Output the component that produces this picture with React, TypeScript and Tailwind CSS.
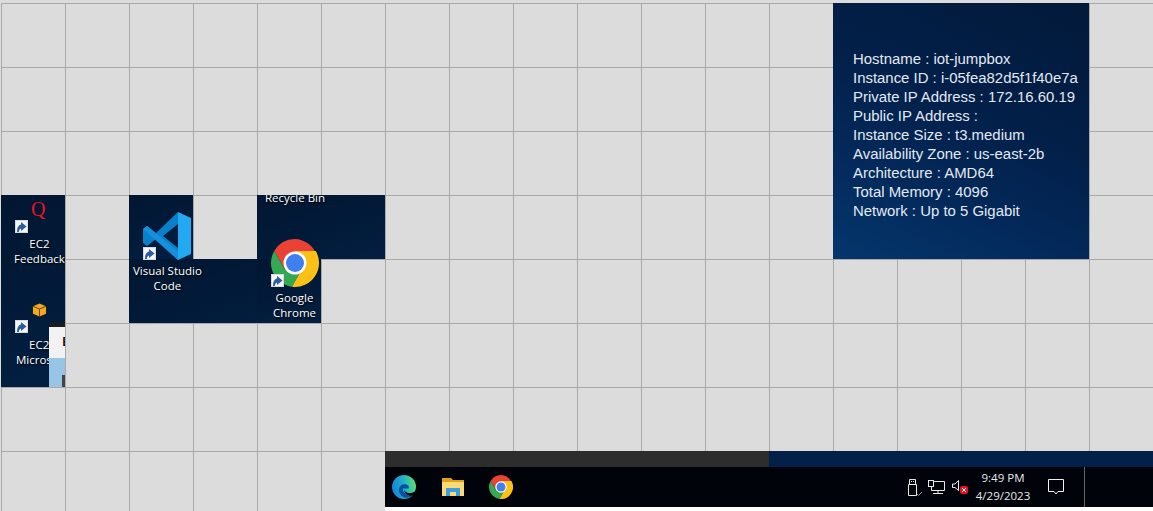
const TILE_BG = 'bg-[linear-gradient(160deg,#011631_0%,#021b3a_60%,#021f42_100%)]';

function Shortcut({ className }: { className: string }) {
  return (
    <svg className={`absolute ${className}`} width="13" height="13" viewBox="0 0 13 13">
      <rect width="13" height="13" fill="#d5dae0" />
      <rect x="1" y="1" width="11" height="11" fill="#f4f6f8" />
      <path d="M2 12C2 7.500 3.500 5 6 4.500V2l5.500 4.500L6 11V8.500C4.800 8.800 4 10 3.800 12z" fill="#2c5c9e" />
    </svg>
  );
}

function ChromeIcon({ size }: { size: number }) {
  return (
    <svg width={size} height={size} viewBox="0 0 48 48">
      <path d="M24 0A24 24 0 0 0 3.200 12L13.600 30 24 14h20.800A24 24 0 0 0 24 0z" fill="#ea4335" />
      <path d="M3.200 12A24 24 0 0 0 21 47.800L31 30H13.600z" fill="#34a853" />
      <path d="M44.800 12H24l7 18-10 17.800A24 24 0 0 0 44.800 12z" fill="#fbc116" />
      <circle cx="24" cy="24" r="11.500" fill="#fff" />
      <circle cx="24" cy="24" r="9" fill="#3f7fee" />
    </svg>
  );
}

function VsCodeIcon() {
  return (
    <svg width="50" height="50" viewBox="0 0 50 50">
      <path d="M36 1 14 22 5 15l-4 3v14l4 3 9-7 22 21z" fill="#0a7fcb" />
      <path d="M36 13 21 25l15 12z" fill="#021c3e" />
      <path d="M1 18l4-3 31 25v9L1 18z" fill="#1590dc" />
      <path d="M36 1 49 7v36l-13 6z" fill="#23a9f2" />
    </svg>
  );
}

function DesktopLabel({ lines, className }: { lines: string[]; className: string }) {
  return (
    <div className={`absolute text-center text-[11.5px] leading-[15px] text-white whitespace-nowrap [text-shadow:1px_1px_2px_#000] ${className}`}>
      {lines.map((line) => (
        <div key={line}>{line}</div>
      ))}
    </div>
  );
}

const INFO = [
  'Hostname : iot-jumpbox',
  'Instance ID : i-05fea82d5f1f40e7a',
  'Private IP Address : 172.16.60.19',
  'Public IP Address :',
  'Instance Size : t3.medium',
  'Availability Zone : us-east-2b',
  'Architecture : AMD64',
  'Total Memory : 4096',
  'Network : Up to 5 Gigabit',
];

export default function App() {
  return (
    <div className="h-[511px] w-[1153px] overflow-hidden bg-[#dcdcdc] font-['Open_Sans','Noto_Sans',sans-serif]">
      <div className="grid grid-cols-[repeat(18,64px)] grid-rows-[repeat(8,64px)] ml-px mt-[3px] w-[1152px] h-[512px] bg-[linear-gradient(to_right,#a9a9a9_1px,transparent_1px),linear-gradient(to_bottom,#a9a9a9_1px,transparent_1px)] bg-[size:64px_64px]">
        {/* feedback / micros column */}
        <div className={`relative col-start-1 row-start-4 row-span-3 overflow-hidden ${TILE_BG}`}>
          <span className="absolute left-[30px] top-[3px] font-['Liberation_Serif',serif] text-[20px] leading-[22px] text-[#ee1320]">Q</span>
          <Shortcut className="left-[14px] top-[25px]" />
          <DesktopLabel lines={['EC2', 'Feedback']} className="left-[13px] top-[41px]" />
          <svg className="absolute left-[31px] top-[107px]" width="15" height="16" viewBox="0 0 16 16">
            <path d="M8 1l7 3v8l-7 3-7-3V4z" fill="#f2a91e" />
            <path d="M1 4l7 3 7-3M8 7v8" stroke="#5a3c08" strokeWidth="1" fill="none" />
          </svg>
          <Shortcut className="left-[14px] top-[125px]" />
          <DesktopLabel lines={['EC2']} className="left-[28px] top-[142px]" />
          <DesktopLabel lines={['Micros']} className="left-[15px] top-[157px]" />
          <div className="absolute left-[48px] top-[128px] h-[64px] w-[16px] bg-[#f2f2f2]">
            <div className="h-[4px] bg-[#1c1c1c]" />
            <div className="h-[31px] pl-[13px] text-[13px] leading-[29px] font-semibold text-black">E</div>
            <div className="h-[29px] bg-[#98c4e6] pl-[13px] pt-[17px]">
              <div className="h-[12px] w-[3px] bg-[#444]" />
            </div>
          </div>
        </div>

        {/* vs code */}
        <div className={`relative col-start-3 row-start-4 ${TILE_BG}`}>
          <div className="absolute left-[13px] top-[16px] z-10">
            <VsCodeIcon />
          </div>
          <Shortcut className="left-[14px] top-[52px] z-10" />
        </div>
        <div className={`relative col-start-3 col-span-3 row-start-5 ${TILE_BG}`}>
          <DesktopLabel lines={['Visual Studio', 'Code']} className="left-[4px] top-[4px]" />
        </div>

        {/* recycle bin + chrome */}
        <div className={`relative col-start-5 col-span-2 row-start-4 overflow-hidden ${TILE_BG}`}>
          <DesktopLabel lines={['Recycle Bin']} className="left-[8px] top-[-5px]" />
        </div>
        <div className={`relative col-start-5 row-start-5 ${TILE_BG}`}>
          <div className="absolute left-[14px] top-[-20px]">
            <ChromeIcon size={48} />
          </div>
          <Shortcut className="left-[14px] top-[15px]" />
          <DesktopLabel lines={['Google', 'Chrome']} className="left-[16px] top-[31px]" />
        </div>

        {/* bginfo panel */}
        <div className="col-start-14 col-span-4 row-start-1 row-span-4 flex items-center bg-[linear-gradient(25deg,#04366c_0%,#03295a_30%,#021f48_60%,#021a3a_100%)] pl-[20px] pt-[7px]">
          <div className="font-['Liberation_Sans',sans-serif] text-[14.93px] leading-[19px] text-[#e2e9f2]">
            {INFO.map((line) => (
              <div key={line}>{line}</div>
            ))}
          </div>
        </div>

        {/* taskbar */}
        <div className="col-start-7 col-span-12 row-start-8 flex flex-col bg-white">
          <div className="flex h-[16px] shrink-0">
            <div className="w-[384px] bg-[#2d2d2d]" />
            <div className="flex-1 bg-[#03204a]" />
          </div>
          <div className="flex h-[40px] items-center bg-[#01030a] text-white">
            <div className="flex w-[144px] items-center gap-[25px] pl-[6px]">
              <svg width="26" height="26" viewBox="0 0 26 26">
                <defs>
                  <linearGradient id="edgeTop" x1="0" y1="0.600" x2="1" y2="0.400">
                    <stop offset="0" stopColor="#1580dc" />
                    <stop offset="0.550" stopColor="#1fb4c8" />
                    <stop offset="1" stopColor="#62dc6a" />
                  </linearGradient>
                </defs>
                <circle cx="13" cy="13" r="12" fill="url(#edgeTop)" />
                <path d="M8 16C8 11 12 9.500 15.500 10.500 18 11.500 18.500 13.500 17.500 14.500H12C11 17.500 14 21 21 20L20 23C14 25.500 8 22 8 16z" fill="#0d4f9c" />
                <path d="M13 15C13 18 17 20 22 18.500 24 18 25 16 25 14V26H17C20 25 23 23 24 21 20 23 13 21 13 15z" fill="#01030a" />
              </svg>
              <svg width="22" height="18" viewBox="0 0 22 18">
                <path d="M0 0h9l2 2h11v3H0z" fill="#e0a019" />
                <rect y="4" width="22" height="14" fill="#fbd974" />
                <path d="M4 10h14v8h-4v-4H8v4H4z" fill="#3e9ce0" />
              </svg>
              <ChromeIcon size={24} />
            </div>
            <div className="flex-1" />
            <div className="flex items-center">
              <svg className="mr-[5px]" width="16" height="17" viewBox="0 0 16 17" fill="none" stroke="#e8e8e8">
                <path d="M2.500.5h6v5h-6zM1.500 5.500h8v11h-8z" />
                <path d="M4 2.500h1M6 2.500h1" />
                <path d="M10 15l1.500 1.500L15 13" stroke="#999" />
              </svg>
              <svg className="mr-[7px]" width="17" height="15" viewBox="0 0 17 15" fill="none" stroke="#e8e8e8">
                <path d="M3.500 1.500h13v9h-13zM10 10.500v3M5 13.500h10" />
                <rect x="0.500" y="0.500" width="5" height="6" fill="#01030a" />
              </svg>
              <svg width="16" height="14" viewBox="0 0 16 14">
                <path d="M.5 4h2.500L6.500.5v10L3 7.500H.5z" fill="none" stroke="#e8e8e8" />
                <rect x="8" y="6" width="8" height="8" rx="2" fill="#e81123" />
                <path d="M10 8l4 4M14 8l-4 4" stroke="#fff" />
              </svg>
            </div>
            <div className="w-[70px] text-center text-[11.5px] leading-[18px] text-[#e8e8e8]">
              <div>9:49 PM</div>
              <div>4/29/2023</div>
            </div>
            <svg className="ml-[10px] mr-[20px]" width="16" height="16" viewBox="0 0 16 16" fill="none" stroke="#f0f0f0">
              <path d="M.5.500h15v12H10l-2 2.500-2-2.500H.5z" />
            </svg>
            <div className="h-full w-[69px] border-l border-[#666]" />
          </div>
        </div>
      </div>
    </div>
  );
}
